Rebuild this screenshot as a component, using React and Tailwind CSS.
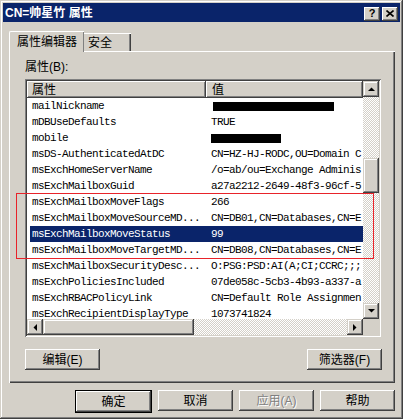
import React from 'react';

const raised =
    'bg-[#d4d0c8] shadow-[inset_-1px_-1px_#404040,inset_1px_1px_#ffffff,inset_-2px_-2px_#808080,inset_2px_2px_#d4d0c8]';
const arrowBtn =
    'bg-[#d4d0c8] shadow-[inset_-1px_-1px_#404040,inset_1px_1px_#d4d0c8,inset_-2px_-2px_#808080,inset_2px_2px_#ffffff]';
const dither =
    'bg-[repeating-conic-gradient(#d4d0c8_0_25%,#ffffff_0_50%)] bg-[length:2px_2px]';
const uiFont = "font-['Liberation_Sans','Noto_Sans_CJK_SC',sans-serif]";

// values are trimmed to what the column shows before the scrollbar
const rows = [
    { name: 'mailNickname', bar: 'w-[121px] ml-[2px]' },
    { name: 'mDBUseDefaults', value: 'TRUE' },
    { name: 'mobile', bar: 'w-[70px]' },
    { name: 'msDS-AuthenticatedAtDC', value: 'CN=HZ-HJ-RODC,OU=Domain C' },
    { name: 'msExchHomeServerName', value: '/o=ab/ou=Exchange Adminis' },
    { name: 'msExchMailboxGuid', value: 'a27a2212-2649-48f3-96cf-5' },
    { name: 'msExchMailboxMoveFlags', value: '266' },
    { name: 'msExchMailboxMoveSourceMD...', value: 'CN=DB01,CN=Databases,CN=E' },
    { name: 'msExchMailboxMoveStatus', value: '99', selected: true },
    { name: 'msExchMailboxMoveTargetMD...', value: 'CN=DB08,CN=Databases,CN=E' },
    { name: 'msExchMailboxSecurityDesc...', value: 'O:PSG:PSD:AI(A;CI;CCRC;;;' },
    { name: 'msExchPoliciesIncluded', value: '07de058c-5cb3-4b93-a337-a' },
    { name: 'msExchRBACPolicyLink', value: 'CN=Default Role Assignmen' },
    { name: 'msExchRecipientDisplayType', value: '1073741824' },
];

function Arrow({ dir }) {
    const pts = {
        up: '0,4 7,4 3.5,0.5',
        down: '0,0 7,0 3.5,3.5',
        left: '4,0 4,7 0.5,3.5',
        right: '0,0 0,7 3.5,3.5',
    }[dir];
    const vertical = dir === 'up' || dir === 'down';
    return (
        <svg width={vertical ? 7 : 4} height={vertical ? 4 : 7} viewBox={vertical ? '0 0 7 4' : '0 0 4 7'}>
            <polygon points={pts} fill="#000" />
        </svg>
    );
}

function Button({ children, className = '', disabled }) {
    return (
        <div
            className={`${raised} h-[21px] w-[75px] flex items-center justify-center text-[12px] ${
                disabled ? 'text-[#808080] [text-shadow:1px_1px_#ffffff]' : 'text-black'
            } ${className}`}
        >
            {children}
        </div>
    );
}

export default function App() {
    return (
        <div
            className={`relative w-[403px] h-[419px] bg-[#d4d0c8] p-[3px] flex flex-col ${uiFont} shadow-[inset_-1px_-1px_#404040,inset_1px_1px_#d4d0c8,inset_-2px_-2px_#808080,inset_2px_2px_#ffffff] overflow-hidden`}
        >
            {/* Title bar */}
            <div className="h-[19px] bg-[#0a246a] flex items-center justify-between pl-[2px] pr-[2px] shrink-0">
                <span className="text-white font-bold text-[12px] leading-none">CN=帅星竹 属性</span>
                <div className="flex gap-[2px] pt-[2px]">
                    <div className={`${raised} w-[16px] h-[14px] flex items-center justify-center text-[11px] font-bold leading-none text-black`}>
                        ?
                    </div>
                    <div className={`${raised} w-[16px] h-[14px] flex items-center justify-center`}>
                        <svg width="8" height="7" viewBox="0 0 8 7">
                            <path d="M0.5 0.5 L7.5 6.5 M7.5 0.5 L0.5 6.5" stroke="#000" strokeWidth="1.6" />
                        </svg>
                    </div>
                </div>
            </div>

            <div className="ml-[6px] w-[386px] flex flex-col">
                {/* Tabs */}
                <div className="mt-[8px] h-[21px] flex items-end">
                    <div className="relative z-10 h-[21px] w-[75px] bg-[#d4d0c8] border-t border-l border-white rounded-tl-[2px] shadow-[inset_-1px_0_#808080] flex items-center pl-[7px] text-[12px] text-black -mb-px">
                        属性编辑器
                    </div>
                    <div className="h-[18px] w-[47px] bg-[#d4d0c8] border-t border-white shadow-[inset_-1px_0_#404040,inset_-2px_0_#808080] flex items-center pl-[4px] text-[12px] text-black">
                        安全
                    </div>
                </div>

                {/* Panel */}
                <div className="h-[332px] border-t border-l border-white shadow-[inset_-1px_-1px_#404040,inset_-2px_-2px_#808080] pl-[15px] pt-[8px] flex flex-col">
                    <div className="h-[14px] leading-[14px] text-[12px] text-black">属性(B):</div>

                    {/* List view */}
                    <div className="mt-[5px] w-[356px] h-[258px] bg-white p-[2px] shadow-[inset_1px_1px_#808080,inset_-1px_-1px_#ffffff,inset_2px_2px_#404040,inset_-2px_-2px_#d4d0c8] flex flex-col">
                        <div className="flex h-[238px]">
                            <div className="w-[336px] overflow-hidden flex flex-col">
                                <div className="flex h-[17px] shrink-0 text-[12px] text-black">
                                    <div className={`${raised} w-[179px] pl-[5px] flex items-center`}>属性</div>
                                    <div className={`${raised} flex-1 pl-[6px] flex items-center`}>值</div>
                                </div>
                                <div className="font-['Liberation_Mono',monospace] text-[11px] tracking-[-0.6px]">
                                    {rows.map((r) => (
                                        <div
                                            key={r.name}
                                            className={`ml-[3px] h-[16px] leading-[16px] flex whitespace-nowrap ${
                                                r.selected ? 'bg-[#0a246a] text-white' : 'text-black'
                                            }`}
                                        >
                                            <div className="w-[176px] pl-[2px] overflow-hidden shrink-0">{r.name}</div>
                                            <div className="flex-1 pl-[5px] overflow-hidden flex items-center">
                                                {r.bar ? <div className={`h-[9px] bg-black ${r.bar}`} /> : r.value}
                                            </div>
                                        </div>
                                    ))}
                                </div>
                            </div>
                            <div className={`w-[16px] flex flex-col ${dither}`}>
                                <div className={`${arrowBtn} h-[16px] flex items-center justify-center`}>
                                    <Arrow dir="up" />
                                </div>
                                <div className={`${arrowBtn} mt-[61px] h-[35px]`} />
                                <div className="flex-1" />
                                <div className={`${arrowBtn} h-[16px] flex items-center justify-center`}>
                                    <Arrow dir="down" />
                                </div>
                            </div>
                        </div>
                        <div className="flex h-[16px]">
                            <div className={`w-[336px] flex ${dither}`}>
                                <div className={`${arrowBtn} w-[16px] flex items-center justify-center`}>
                                    <Arrow dir="left" />
                                </div>
                                <div className={`${arrowBtn} w-[151px]`} />
                                <div className="flex-1" />
                                <div className={`${arrowBtn} w-[16px] flex items-center justify-center`}>
                                    <Arrow dir="right" />
                                </div>
                            </div>
                            <div className="w-[16px] bg-[#d4d0c8]" />
                        </div>
                    </div>

                    <div className="mt-[12px] w-[357px] flex justify-between">
                        <Button>编辑(E)</Button>
                        <Button>筛选器(F)</Button>
                    </div>
                </div>

                {/* Dialog buttons */}
                <div className="mt-[7px] flex justify-end gap-[6px]">
                    <div className="border border-black">
                        <Button className="h-[19px] w-[73px]">确定</Button>
                    </div>
                    <Button>取消</Button>
                    <Button disabled>应用(A)</Button>
                    <Button>帮助</Button>
                </div>
            </div>

            {/* Highlight annotation */}
            <div className="absolute left-[16px] top-[193px] w-[358px] h-[66px] border border-[#e8232a] pointer-events-none" />
        </div>
    );
}
